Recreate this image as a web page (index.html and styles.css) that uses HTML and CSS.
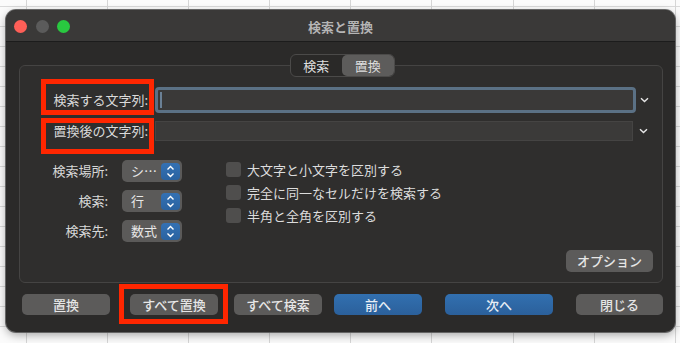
FILE: index.html
```html
<!DOCTYPE html>
<html lang="ja">
<head>
<meta charset="utf-8">
<title>検索と置換</title>
<link rel="stylesheet" href="styles.css">
</head>
<body>
<div class="desk">
  <div class="window">
    <div class="titlebar">
      <div class="lights">
        <span class="light red"></span>
        <span class="light gray"></span>
        <span class="light green"></span>
      </div>
      <div class="title">検索と置換</div>
    </div>
    <div class="content">
      <div class="tabs">
        <span class="tab">検索</span>
        <span class="tab on">置換</span>
      </div>
      <div class="panel">
        <div class="field-row first">
          <span class="flabel">検索する文字列:</span>
          <div class="input focus"><span class="caret"></span></div>
          <svg class="chev" width="9" height="6" viewBox="0 0 9 6"><path d="M1 1.2 L4.5 4.6 L8 1.2" fill="none" stroke="#e6e6e6" stroke-width="1.4"/></svg>
        </div>
        <div class="field-row second">
          <span class="flabel">置換後の文字列:</span>
          <div class="input"></div>
          <svg class="chev" width="9" height="6" viewBox="0 0 9 6"><path d="M1 1.2 L4.5 4.6 L8 1.2" fill="none" stroke="#e6e6e6" stroke-width="1.4"/></svg>
        </div>
        <div class="opts">
          <div class="selects">
            <div class="sel-row">
              <span class="slabel">検索場所:</span>
              <div class="popup"><span class="pv">シ…</span><span class="stepper"><svg width="19" height="17" viewBox="0 0 19 17"><path d="M6.5 6.5 L9.5 3.5 L12.5 6.5 M6.5 10.5 L9.5 13.5 L12.5 10.5" fill="none" stroke="#fff" stroke-width="1.4"/></svg></span></div>
            </div>
            <div class="sel-row">
              <span class="slabel">検索:</span>
              <div class="popup"><span class="pv">行</span><span class="stepper"><svg width="19" height="17" viewBox="0 0 19 17"><path d="M6.5 6.5 L9.5 3.5 L12.5 6.5 M6.5 10.5 L9.5 13.5 L12.5 10.5" fill="none" stroke="#fff" stroke-width="1.4"/></svg></span></div>
            </div>
            <div class="sel-row">
              <span class="slabel">検索先:</span>
              <div class="popup"><span class="pv">数式</span><span class="stepper"><svg width="19" height="17" viewBox="0 0 19 17"><path d="M6.5 6.5 L9.5 3.5 L12.5 6.5 M6.5 10.5 L9.5 13.5 L12.5 10.5" fill="none" stroke="#fff" stroke-width="1.4"/></svg></span></div>
            </div>
          </div>
          <div class="checks">
            <div class="check"><span class="box"></span><span>大文字と小文字を区別する</span></div>
            <div class="check"><span class="box"></span><span>完全に同一なセルだけを検索する</span></div>
            <div class="check"><span class="box"></span><span>半角と全角を区別する</span></div>
          </div>
        </div>
        <div class="panel-foot">
          <span class="btn opt">オプション</span>
        </div>
      </div>
      <div class="actions">
        <span class="btn b1">置換</span>
        <span class="btn b2">すべて置換</span>
        <span class="btn b3">すべて検索</span>
        <span class="btn blue b4">前へ</span>
        <span class="btn blue b5">次へ</span>
        <span class="btn b6">閉じる</span>
      </div>
    </div>
    <div class="mark m1"></div>
    <div class="mark m2"></div>
    <div class="mark m3"></div>
  </div>
</div>
</body>
</html>
```
FILE: styles.css
```css
* { box-sizing: border-box; }
html, body { margin: 0; padding: 0; }
body {
  width: 680px;
  height: 343px;
  overflow: hidden;
  font-family: "Noto Sans CJK JP", "Noto Sans", sans-serif;
  font-size: 13px;
  color: #d8d8d8;
}
.desk {
  width: 680px;
  height: 343px;
  padding: 10px 0 0 6px;
  background-color: #fbfbfb;
  background-image:
    repeating-linear-gradient(90deg, transparent 0 26px, #d6d6d6 26px 27px, transparent 27px 81.1px),
    repeating-linear-gradient(0deg, transparent 0 19px, #dadada 19px 20px);
  background-position: 0 0, 0 3px;
}
.window {
  position: relative;
  width: 669px;
  height: 322px;
  border-radius: 10px;
  background: #2b2a29;
  box-shadow: 0 0 0 1px rgba(90,90,90,0.9), 0 3px 10px rgba(0,0,0,0.35);
  overflow: hidden;
}
.titlebar {
  height: 32px;
  background: #3a3938;
  border-bottom: 1px solid #1c1c1c;
  display: flex;
  align-items: center;
  position: relative;
}
.lights {
  display: flex;
  gap: 8.5px;
  padding-left: 8px;
  margin-top: 1px;
}
.light {
  width: 13px;
  height: 13px;
  border-radius: 50%;
}
.light.red { background: #fe5f57; }
.light.gray { background: #5b5b5b; }
.light.green { background: #29c840; }
.title {
  position: absolute;
  left: 0; right: 0;
  text-align: center;
  font-weight: 700;
  color: #b5b5b5;
  font-size: 13px;
  line-height: 16px;
  top: 9px;
}
.content {
  padding: 12px 12px 0 13px;
  display: flex;
  flex-direction: column;
}
.tabs {
  align-self: center;
  margin-left: 2px;
  position: relative;
  z-index: 2;
  display: flex;
  height: 23px;
  width: 105px;
  margin-bottom: -12px;
  border: 1px solid #4b4a49;
  border-radius: 6px;
  background: #2a2928;
  padding: 0;
}
.tab {
  flex: 1;
  display: flex;
  align-items: center;
  justify-content: center;
  color: #dedede;
  line-height: 16px;
  border-radius: 5px;
}
.tab.on {
  background: #5d5c5b;
}
.panel {
  height: 218px;
  border: 1px solid #454443;
  border-radius: 6px;
  background: #2f2e2d;
  padding: 21px 9px 0 0;
  display: flex;
  flex-direction: column;
}
.field-row {
  display: flex;
  align-items: center;
  height: 26px;
}
.field-row.second { margin-top: 5px; }
.flabel {
  width: 128px;
  text-align: right;
  line-height: 16px;
  color: #dadada;
  flex: none;
}
.input {
  margin-left: 7px;
  height: 20px;
  width: 478px;
  background: #3b3a39;
  border: 1px solid #454443;
  flex: none;
  position: relative;
}
.input.focus {
  height: 26px;
  width: 481px;
  border: 3px solid #5b7185;
  border-radius: 4px;
  background: #3a3938;
}
.caret {
  position: absolute;
  left: 2px;
  top: 2px;
  width: 2px;
  height: 16px;
  background: #6a8095;
}
.chev { flex: none; margin-left: 4px; }
.field-row.second .chev { margin-left: 6px; }
.opts {
  display: flex;
  margin-top: 16px;
}
.selects {
  display: flex;
  flex-direction: column;
  gap: 8px;
}
.sel-row {
  display: flex;
  align-items: center;
  height: 22px;
}
.slabel {
  width: 88px;
  text-align: right;
  line-height: 16px;
  color: #d8d8d8;
}
.popup {
  margin-left: 14px;
  width: 60px;
  height: 22px;
  border-radius: 5px;
  background: #5b5a59;
  display: flex;
  align-items: center;
  justify-content: space-between;
  padding: 0 2px 0 9px;
}
.pv {
  color: #e8e8e8;
  line-height: 16px;
}
.stepper {
  width: 19px;
  height: 17px;
  border-radius: 4px;
  background: linear-gradient(#3471b3, #2a62a0);
  display: flex;
}
.checks {
  margin-left: 44px;
  margin-top: 2px;
  display: flex;
  flex-direction: column;
  gap: 8px;
}
.check {
  display: flex;
  align-items: center;
  height: 15px;
  line-height: 16px;
  color: #dcdcdc;
}
.box {
  width: 15px;
  height: 15px;
  border-radius: 3px;
  background: #4f4e4d;
  margin-right: 6px;
  flex: none;
}
.panel-foot {
  margin-top: auto;
  margin-bottom: 10px;
  display: flex;
  justify-content: flex-end;
}
.btn {
  display: flex;
  align-items: center;
  justify-content: center;
  height: 21px;
  border-radius: 5px;
  background: #5c5b5a;
  color: #e6e6e6;
  line-height: 16px;
  font-weight: 500;
  flex: none;
}
.btn.opt { width: 87px; height: 22px; }
.btn.blue { background: linear-gradient(#3270b0, #2b609b); color: #e8eef5; }
.actions {
  display: flex;
  margin-top: 11px;
}
.b1 { width: 88px; margin-left: 3px; }
.b2 { width: 88px; margin-left: 20px; }
.b3 { width: 88px; margin-left: 16px; }
.b4 { width: 88px; margin-left: 12px; }
.b5 { width: 108px; margin-left: 23px; }
.b6 { width: 87px; margin-left: 23px; }
.mark {
  position: absolute;
  border: 5px solid #ff2600;
  z-index: 5;
}
.m1 { left: 35px; top: 69px; width: 113px; height: 36px; }
.m2 { left: 35px; top: 108px; width: 113px; height: 36px; }
.m3 { left: 113px; top: 274px; width: 109px; height: 40px; }
```
